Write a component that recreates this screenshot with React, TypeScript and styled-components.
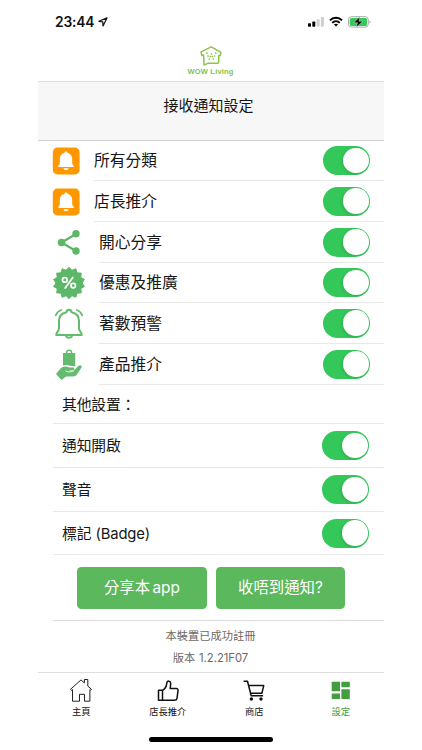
import React from 'react';
import styled, { createGlobalStyle } from 'styled-components';

const GlobalStyle = createGlobalStyle`
  *, *::before, *::after { box-sizing: border-box; }
  body {
    margin: 0;
    background: #fff;
    color: #161616;
    font-family: Inter, "Noto Sans CJK TC", sans-serif;
    -webkit-font-smoothing: antialiased;
  }
  svg { display: block; flex: none; }
`;

const Screen = styled.main`
  width: 346px;
  height: 750px;
  margin-left: 38px;
  display: flex;
  flex-direction: column;
  background: #fff;
`;

const StatusBar = styled.div`
  height: 43px;
  display: flex;
  align-items: center;
  padding: 0 13px 0 17px;
`;

const Clock = styled.span`
  font-size: 13.8px;
  line-height: 16px;
  font-weight: 600;
  letter-spacing: -0.15px;
  width: 39px;
  white-space: nowrap;
  color: #111;
  margin-right: 4px;
`;

const StatusIcons = styled.div`
  margin-left: auto;
  display: flex;
  align-items: center;
  gap: 5px;
`;

const Brand = styled.div`
  height: 38px;
  display: flex;
  flex-direction: column;
  align-items: center;
  padding: 3px 1px 0 0;
  color: #8cc34b;
`;

const BrandName = styled.span`
  font: 700 7.6px/9px "Liberation Sans", sans-serif;
  letter-spacing: 0.15px;
  margin-top: 1px;
`;

const TitleBar = styled.header`
  height: 60px;
  background: #f7f7f7;
  border-top: 1px solid #dcdcdc;
  border-bottom: 1px solid #d2d2d2;
  padding: 13px 5px 0 0;
  text-align: center;
`;

const Title = styled.h1`
  margin: 0;
  font-size: 15px;
  line-height: 22px;
  font-weight: 400;
`;

const CategoryRow = styled.div<{ $height: number }>`
  height: ${(p) => p.$height}px;
  display: flex;
  padding-left: 14px;
`;

const IconCell = styled.div<{ $wide: boolean }>`
  width: ${(p) => (p.$wide ? 47 : 42)}px;
  display: flex;
  align-items: center;
`;

const CategoryBody = styled.div`
  flex: 1;
  display: flex;
  align-items: center;
  justify-content: space-between;
  padding-right: 14px;
  border-bottom: 1px solid #e9e9e9;
  font-size: 15.75px;
  line-height: 24px;
`;

const SettingRow = styled.div<{ $height: number }>`
  height: ${(p) => p.$height}px;
  margin-left: 14.5px;
  display: flex;
  align-items: center;
  justify-content: space-between;
  padding: 0 15px 0 9.5px;
  border-bottom: 1px solid #e9e9e9;
  font-size: 14.8px;
  line-height: 22px;
  letter-spacing: -0.12px;
`;

const RowLabel = styled.span`
  padding-top: 1px;
`;

const Switch = styled.span`
  width: 47px;
  height: 29px;
  border-radius: 15px;
  background: #34c759;
  display: flex;
  align-items: center;
  justify-content: flex-end;
  padding-right: 1.5px;
`;

const Knob = styled.span`
  width: 25.5px;
  height: 25.5px;
  border-radius: 50%;
  background: #fff;
  box-shadow: -1px 1px 3px rgba(0, 0, 0, 0.12);
`;

const Actions = styled.div`
  height: 66px;
  margin-left: 14.5px;
  padding: 12px 0 0 24.7px;
  display: flex;
  gap: 9px;
  border-bottom: 1px solid #dedede;
`;

const ActionButton = styled.button`
  width: 129.5px;
  height: 41.5px;
  padding: 1px 0 0;
  border: 0;
  border-radius: 4.5px;
  background: #5cb85c;
  color: #fff;
  font: 400 15.4px/24px Inter, "Noto Sans CJK TC", sans-serif;
  word-spacing: -2px;
`;

const Footer = styled.footer`
  height: 51px;
  padding: 4px 1px 0 0;
  text-align: center;
  color: #6c6866;
  font-size: 11.25px;
  line-height: 22px;
`;

const FooterLine = styled.div`
  word-spacing: 0.5px;
`;

const TabBar = styled.nav`
  height: 78px;
  border-top: 1px solid #dedede;
  display: grid;
  grid-template-columns: repeat(4, 86.5px);
  grid-template-rows: 48px 1fr;
  justify-items: center;
`;

const Tab = styled.a<{ $active?: boolean }>`
  display: flex;
  flex-direction: column;
  align-items: center;
  padding-top: 5px;
  gap: 1.5px;
  color: ${(p) => (p.$active ? '#449d3e' : '#141414')};
  font-size: 9.3px;
  line-height: 14px;
  font-weight: 400;
`;

const HomeIndicator = styled.div`
  grid-column: 1 / -1;
  width: 124px;
  height: 5px;
  margin-top: 16px;
  border-radius: 3px;
  background: #000;
`;

const Toggle = () => (
  <Switch role="switch" aria-checked="true">
    <Knob />
  </Switch>
);

const BellBadge = () => (
  <svg width="28" height="28" viewBox="0 0 28 28">
    <rect x="0.8" y="0.6" width="26.8" height="26.8" rx="4.5" fill="#ff9800" />
    <path
      d="M14 4.500c-1 0-1.700.6-1.700 1.500C9.200 6.800 7.800 9 7.800 12v4.500c0 1-1.800 2-1.800 3.600h16c0-1.600-1.800-2.600-1.800-3.600V12c0-3-1.400-5.200-4.500-6 0-.9-.7-1.500-1.700-1.500zM11.400 21.200c.3 1.300 1.300 1.900 2.600 1.900s2.300-.6 2.600-1.900z"
      fill="#fff"
    />
  </svg>
);

const ShareIcon = () => (
  <svg width="32" height="28" viewBox="0 0 32 28" fill="#5cb868">
    <path d="M24 5 9.500 13.500 24 22" fill="none" stroke="#5cb868" strokeWidth="2.300" />
    <circle cx="24" cy="4.800" r="3.700" />
    <circle cx="9.500" cy="13.500" r="3.800" />
    <circle cx="24" cy="22" r="3.700" />
  </svg>
);

const burst = Array.from({ length: 28 }, (_, i) => {
  const r = i % 2 ? 13 : 15.8;
  const a = (i * Math.PI) / 14 - Math.PI / 2;
  return `${(17 + r * Math.cos(a)).toFixed(2)},${(17 + r * Math.sin(a)).toFixed(2)}`;
}).join(' ');

const DiscountIcon = () => (
  <svg width="34" height="34" viewBox="0 0 34 34">
    <polygon points={burst} fill="#5cb868" stroke="#5cb868" strokeLinejoin="round" />
    <g fill="none" stroke="#fff" strokeWidth="1.700" strokeLinecap="round">
      <circle cx="12.800" cy="13.900" r="2.300" />
      <circle cx="21.200" cy="19.600" r="2.300" />
      <path d="M20.800 11.500 13.200 22" />
    </g>
  </svg>
);

const AlertIcon = () => (
  <svg
    width="34"
    height="32"
    viewBox="0 0 34 32"
    fill="none"
    stroke="#62bb6e"
    strokeWidth="2"
    strokeLinecap="round"
    strokeLinejoin="round"
  >
    <path d="M14.500 4.300c.2-3.400 4.800-3.400 5 0 4.800 1 7.500 4.300 7.500 8.700v7.500c0 2.600 2.800 3.700 2.800 6.500H4.200c0-2.800 2.800-3.900 2.800-6.500V13c0-4.400 2.700-7.700 7.500-8.700z" />
    <path d="M14 27.700c.8 2.600 5.200 2.600 6 0" />
    <path
      d="M3.700 7.300c1-2.300 3-4.400 5.500-5.300M30.300 7.300c-1-2.300-3-4.400-5.500-5.300"
      strokeWidth="1.700"
    />
  </svg>
);

const ProductIcon = () => (
  <svg width="34" height="32" viewBox="0 0 34 32" fill="#64bb70">
    <path d="M11 4h12.200V17.500c-2-.6-4-.9-5.700-.8-1-1-4-1-6.500-.1z" />
    <path d="M14.700 5V3.300c0-2.800 4.800-2.800 4.800 0V5" fill="none" stroke="#64bb70" strokeWidth="1.500" />
    <path d="m4 25 4.500-5.500c1.800-2.200 6.500-2.600 8.800-1.100h3.500c2 0 2 2.600 0 2.800l-4.500.4c2.400.9 4.500.5 6.300-.8l4-4c1.600-1.500 4-.1 2.900 1.800l-4.200 6.300c-1.200 1.800-2.700 2.400-4.600 2.500h-6.500L9.500 31z" />
    <path d="M13.500 22.100c2.800 1.200 6.100 1 8.500-.3" fill="none" stroke="#fff" strokeWidth="0.800" />
  </svg>
);

const Logo = () => (
  <svg
    width="22"
    height="20"
    viewBox="0 0 22 20"
    fill="none"
    stroke="#8cc34b"
    strokeWidth="1.500"
    strokeLinejoin="round"
    strokeLinecap="round"
  >
    <path d="M11.300.9 1 5.900l.8 3.600 1.800-.4.500 10 3.600-1.800h9.500c1 0 1.500-.5 1.500-1.500V9.500h1.700l.5-3.200z" />
    <path
      d="M6.800 7.200h.1M8 10h.1M9.200 13h.1M10.200 10.500h.1M11.300 8h.1M12.300 10.500h.1M13.300 13h.1M14.500 10h.1M15.700 7.200h.1"
      strokeWidth="1.700"
    />
  </svg>
);

const LocationArrow = () => (
  <svg width="10" height="10" viewBox="0 0 10 10" fill="none" stroke="#111" strokeWidth="1.200" strokeLinejoin="round">
    <path d="M9 .9.900 4.300l3.900.6.200 4z" />
  </svg>
);

const SignalIcon = () => (
  <svg width="16" height="10" viewBox="0 0 16 10">
    <rect x="0" y="6.300" width="3" height="3.400" rx=".7" fill="#000" />
    <rect x="4.300" y="4.500" width="3" height="5.200" rx=".7" fill="#000" />
    <rect x="8.600" y="2.300" width="3" height="7.400" rx=".7" fill="#cfcfcf" />
    <rect x="12.900" y="0" width="3" height="9.700" rx=".7" fill="#cfcfcf" />
  </svg>
);

const WifiIcon = () => (
  <svg width="14" height="11" viewBox="0 0 14 11" fill="none" stroke="#000" strokeWidth="1.900">
    <path d="M.9 4.300C4.300.8 9.700.8 13.100 4.300M3.200 6.900c2.200-2.200 5.400-2.200 7.600 0" />
    <path d="M7 10.600 4.900 8.500c1.100-1.100 3.100-1.100 4.200 0z" fill="#000" stroke="none" />
  </svg>
);

const BatteryIcon = () => (
  <svg width="23" height="12" viewBox="0 0 23 12">
    <rect x=".5" y=".7" width="19.800" height="10.400" rx="3" fill="#fff" stroke="#a9a9a9" />
    <rect x="1.700" y="1.900" width="17.400" height="8" rx="1.900" fill="#34c759" />
    <path d="M21.500 4.300c1.400.4 1.400 3 0 3.400z" fill="#a9a9a9" />
    <path d="M12 .8 5.700 6.700h3.800L8.300 11.300l6.500-6.100H10.900z" fill="#000" stroke="#fff" strokeWidth=".4" />
  </svg>
);

const HomeIcon = () => (
  <svg width="24" height="25" viewBox="0 0 24 25" fill="none" stroke="#222" strokeWidth="1">
    <path d="M1.500 11.300 12 1.900l3.400 3V1.500h3.400v6.600l3.700 3.200-.8 1-.8-.7v11.600h-5.400v-6.900h-5v6.900H3.500V11.600l-.9.700z" />
  </svg>
);

const ThumbIcon = () => (
  <svg width="24" height="25" viewBox="0 0 24 25" fill="none" stroke="#111" strokeWidth="1.500" strokeLinejoin="round">
    <path d="M2.500 12.300h4v10h-4zM6.500 12.300c2.700-1.500 4-3.800 4.200-6.700 0-3.400 3.800-3.200 4 0L14.200 10.500h6c1.500 0 2 .9 1.800 2.100l-1 7.700c-.3 1.400-1 2-2.400 2H6.500" />
  </svg>
);

const CartIcon = () => (
  <svg width="24" height="25" viewBox="0 0 24 25" fill="none" stroke="#111" strokeWidth="1.500" strokeLinejoin="round">
    <path d="M1.600 3.300h3.900l3.700 14.400h11.900M6.700 7.600h15l-1.800 7.700H8.600" />
    <circle cx="9.400" cy="21" r="1.700" fill="#111" stroke="none" />
    <circle cx="19" cy="21" r="1.700" fill="#111" stroke="none" />
  </svg>
);

const DashboardIcon = () => (
  <svg width="24" height="25" viewBox="0 0 24 25" fill="#449d3e">
    <path d="M2.700 3.800H11v9.400H2.700zM12.400 3.800h8.400v5.400h-8.400zM2.700 15.400H11v5.700H2.700zM12.400 11.200h8.400v9.900h-8.400z" />
  </svg>
);

const categories = [
  { label: '所有分類', icon: <BellBadge />, wide: false, height: 40 },
  { label: '店長推介', icon: <BellBadge />, wide: false, height: 41 },
  { label: '開心分享', icon: <ShareIcon />, wide: true, height: 41 },
  { label: '優惠及推廣', icon: <DiscountIcon />, wide: true, height: 40 },
  { label: '著數預警', icon: <AlertIcon />, wide: true, height: 41 },
  { label: '產品推介', icon: <ProductIcon />, wide: true, height: 41 },
];

const settings = [
  { label: '其他設置：', toggle: false, height: 39 },
  { label: '通知開啟', toggle: true, height: 44 },
  { label: '聲音', toggle: true, height: 44 },
  { label: '標記 (Badge)', toggle: true, height: 43 },
];

const tabs = [
  { label: '主頁', icon: <HomeIcon /> },
  { label: '店長推介', icon: <ThumbIcon /> },
  { label: '商店', icon: <CartIcon /> },
  { label: '設定', icon: <DashboardIcon />, active: true },
];

export default function App() {
  return (
    <>
      <GlobalStyle />
      <Screen>
        <StatusBar>
          <Clock>23:44</Clock>
          <LocationArrow />
          <StatusIcons>
            <SignalIcon />
            <WifiIcon />
            <BatteryIcon />
          </StatusIcons>
        </StatusBar>
        <Brand>
          <Logo />
          <BrandName>WOW Living</BrandName>
        </Brand>
        <TitleBar>
          <Title>接收通知設定</Title>
        </TitleBar>
        {categories.map((c) => (
          <CategoryRow key={c.label} $height={c.height}>
            <IconCell $wide={c.wide}>{c.icon}</IconCell>
            <CategoryBody>
              <RowLabel>{c.label}</RowLabel>
              <Toggle />
            </CategoryBody>
          </CategoryRow>
        ))}
        {settings.map((s) => (
          <SettingRow key={s.label} $height={s.height}>
            <RowLabel>{s.label}</RowLabel>
            {s.toggle && <Toggle />}
          </SettingRow>
        ))}
        <Actions>
          <ActionButton>分享本 app</ActionButton>
          <ActionButton>收唔到通知?</ActionButton>
        </Actions>
        <Footer>
          <FooterLine>本裝置已成功註冊</FooterLine>
          <FooterLine>版本 1.2.21F07</FooterLine>
        </Footer>
        <TabBar>
          {tabs.map((t) => (
            <Tab key={t.label} $active={t.active}>
              {t.icon}
              {t.label}
            </Tab>
          ))}
          <HomeIndicator />
        </TabBar>
      </Screen>
    </>
  );
}
